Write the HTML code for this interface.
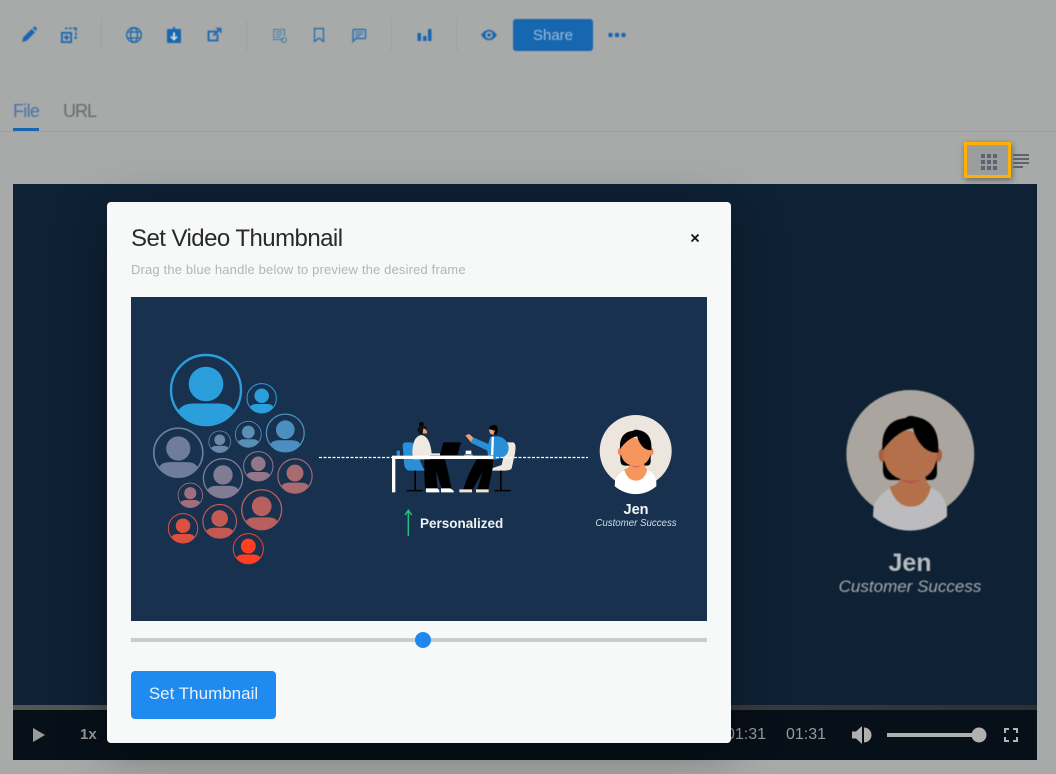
<!DOCTYPE html>
<html><head><meta charset="utf-8"><style>
html,body{margin:0;padding:0;width:1056px;height:774px;overflow:hidden;background:#a8aaa9;font-family:"Liberation Sans",sans-serif}
.a{position:absolute;white-space:nowrap}
svg{position:absolute;overflow:visible}
.b{filter:blur(.5px)}
.t{filter:blur(.3px)}
</style></head><body>
<div style="position:relative;width:1056px;height:774px;overflow:hidden">

<svg class="b" style="left:0;top:0" width="660" height="70" viewBox="0 0 660 70">
<g fill="#9d9f9e"><rect x="101" y="19" width="1" height="32"/><rect x="246" y="19" width="1" height="32"/><rect x="391" y="19" width="1" height="32"/><rect x="456" y="19" width="1" height="32"/></g>
<g fill="#1767b0">
<path d="M22,42L23.300,37.300L31.600,29L35,32.400L26.700,40.700ZM32.600,28L34,26.800Q34.800,26.200 35.600,27L36.600,28Q37.200,28.800 36.600,29.600L35.800,31.100Z"/>
<path d="M61,32H72V43H61ZM62.800,33.800V41.200H70.200V33.800ZM65.600,35H67.400V36.600H69V38.400H67.400V40H65.600V38.400H64V36.600H65.600Z"/>
<path d="M65,27.500h2.400v1.600H65ZM69,27.500h2.500v1.600H69ZM73,27.500h3.800v3.600h-1.600v-2H73ZM75.200,32.500h1.600v2.500h-1.600ZM75.200,36h1.600v2.800h-2.600v-1.500h1Z"/>
<rect x="167" y="29" width="14" height="14"/>
<rect x="173" y="27" width="2" height="5"/>
<path d="M417.500,33H421V41H417.500ZM423,36H426.500V41H423ZM428,29H431.500V41H428Z"/>
<path fill-rule="evenodd" d="M481,35Q484.500,29.700 489,29.700Q493.500,29.700 497,35Q493.500,40.300 489,40.300Q484.500,40.300 481,35ZM489,31.400A3.600,3.600 0 1 0 489,38.600A3.600,3.600 0 1 0 489,31.400Z"/>
<circle cx="489" cy="35" r="1.800"/>
<circle cx="610.500" cy="35" r="2.300"/><circle cx="617" cy="35" r="2.300"/><circle cx="623.500" cy="35" r="2.300"/>
</g>
<g fill="none" stroke="#1767b0">
<g stroke-width="1.300"><circle cx="134" cy="35" r="7.300"/><ellipse cx="134" cy="35" rx="3.400" ry="7.300"/><path d="M127.500,32H140.500M127.500,38H140.500"/></g>
<path d="M216,31.500H208.500V40.500H217.500V34" stroke-width="1.800"/>
<path d="M213.500,35.500L219.500,29.500" stroke-width="2"/><path d="M216,28.500H220.800V33" stroke-width="1.500"/>
<path d="M314.500,28.500H323.500V41.500L319,38L314.500,41.500Z" stroke-width="1.200"/>
<path d="M353,30.500Q353,29.500 354,29.500H364.500Q365.500,29.500 365.500,30.500V37.500Q365.500,38.500 364.500,38.500H356L353,41.500Z" stroke-width="1.500" stroke="#2a72b0"/>
<path d="M355.500,32H363M355.500,34.200H363M355.500,36.300H360" stroke-width="1.100" stroke="#2a72b0"/>
<g stroke="#3d79ad" stroke-width="1"><path d="M283.500,39.500H273.800V29.500H284.500V36"/><path d="M276,32H282M276,34.500H282M276,37H280"/><circle cx="284" cy="40" r="2.500"/></g>
</g>
<path d="M173,32.500H175V37.500L176.700,36L177.700,37L174,40.800L170.300,37L171.300,36L173,37.500Z" fill="#d5dbe0"/>
</svg>

<div class="a b" style="left:513px;top:19px;width:80px;height:32px;background:#1767b0;border-radius:3px;color:#9dbbd8;font-size:15px;line-height:33px;text-align:center">Share</div>
<div class="a b" style="left:13px;top:100px;font-size:18px;line-height:22px;color:#4b70a8;letter-spacing:-.7px">File</div>
<div class="a b" style="left:63px;top:100px;font-size:18px;line-height:22px;color:#666a6c;letter-spacing:-1px">URL</div>
<div class="a" style="left:0;top:131px;width:1056px;height:1px;background:#9ea09f"></div>
<div class="a" style="left:13px;top:128px;width:26px;height:3px;background:#1767b0"></div>

<div class="a" style="left:964px;top:142px;width:41px;height:30px;border:3px solid #ffb000;background:#9c9e9d;box-shadow:1px 2px 6px rgba(0,0,0,.4)"></div>
<svg style="left:0;top:0" width="1056" height="180" viewBox="0 0 1056 180"><g fill="#5b6470">
<rect x="981" y="154" width="4" height="4"/><rect x="987" y="154" width="4" height="4"/><rect x="993" y="154" width="4" height="4"/>
<rect x="981" y="160" width="4" height="4"/><rect x="987" y="160" width="4" height="4"/><rect x="993" y="160" width="4" height="4"/>
<rect x="981" y="166" width="4" height="4"/><rect x="987" y="166" width="4" height="4"/><rect x="993" y="166" width="4" height="4"/>
<rect x="1013" y="154" width="16" height="2"/><rect x="1013" y="158" width="16" height="2"/><rect x="1013" y="162" width="16" height="2"/><rect x="1013" y="166" width="10" height="2"/></g></svg>

<div class="a" style="left:13px;top:184px;width:1024px;height:521px;background:#0e2135"></div>
<div class="a" style="left:13px;top:705px;width:1024px;height:5px;background:linear-gradient(90deg,#565656,#2d2f33)"></div>
<div class="a" style="left:13px;top:710px;width:1024px;height:50px;background:#070f18"></div>

<svg style="left:0;top:0" width="0" height="0">
<defs>
<symbol id="jen" overflow="visible" viewBox="-192 -222 384 444" width="384" height="444" x="-192" y="-222">
<circle r="192" fill="var(--bg)"/>
<path d="M-82,-50V50Q-80,78 -58,78H60Q82,78 80,50V-50Z" fill="#000"/>
<ellipse cx="-84" cy="3" rx="11" ry="20" fill="var(--ear)"/><ellipse cx="84" cy="3" rx="11" ry="20" fill="var(--ear)"/>
<path d="M-112,188L-110,155Q-95,120 -60,103L-30,92H46L68,103Q100,118 110,160V188Q60,230 0,230Q-60,230 -112,188Z" fill="var(--shirt)"/>
<path d="M-62,98Q-34,92 -28,70H46Q50,90 62,98Q48,158 2,158Q-44,158 -62,98Z" fill="var(--skin)"/>
<ellipse cx="2" cy="70" rx="28" ry="18" fill="var(--neck)"/>
<path d="M-80,-20Q-80,-72 -30,-72Q30,-72 80,-20V10Q70,78 2,80Q-70,78 -80,10Z" fill="var(--skin)"/>
<path d="M-84,-20Q-86,-100 -14,-108Q-2,-118 14,-112Q84,-100 84,-20V-5Q60,-2 40,-20Q15,-45 8,-78Q-40,-70 -84,-10Z" fill="#000"/>
</symbol>
<symbol id="u" overflow="visible" viewBox="-36 -36 72 72" width="72" height="72" x="-36" y="-36">
<circle r="35" fill="none" stroke="currentColor" stroke-width="2.400"/>
<circle cy="-6" r="17.300" fill="currentColor"/>
<path d="M-27.500,20Q-23,13.500 -12,13.500H12Q23,13.500 27.500,20A33.500,33.500 0 0 1 -27.500,20Z" fill="currentColor"/>
</symbol>
</defs>
</svg>

<svg class="b" style="left:0;top:0;--bg:#aaa59e;--ear:#a85f45;--neck:#b5584f;--shirt:#bcbcbe;--skin:#b4704a" width="1056" height="700">
<use href="#jen" transform="translate(910.300,454) scale(.3333)"/>
</svg>
<div class="a b" style="left:810px;top:548px;width:200px;text-align:center;font-size:25px;font-weight:bold;line-height:30px;color:#b8bbbe">Jen</div>
<div class="a b" style="left:810px;top:577px;width:200px;text-align:center;font-size:17px;font-style:italic;line-height:20px;color:#a5abb2">Customer Success</div>

<svg style="left:0;top:0" width="1056" height="774" viewBox="0 0 1056 774">
<path d="M33,728L45,735L33,742Z" fill="#9a9a9a"/>
<path d="M852,731.500H856L862,726V744L856,738.500H852Z" fill="#b0b0b0"/>
<path d="M864,727.500A7.500,7.500 0 0 1 864,742.500Z" fill="#b0b0b0"/>
<rect x="887" y="733" width="92" height="4" fill="#b0b0b0"/><circle cx="979" cy="735" r="7.500" fill="#b0b0b0"/>
<path d="M1005,733V729H1009M1013,729H1017V733M1017,737V741H1013M1009,741H1005V737" fill="none" stroke="#b5b5b5" stroke-width="2"/>
</svg>
<div class="a" style="left:80px;top:725px;font-size:15px;font-weight:bold;line-height:20px;color:#9a9a9a">1x</div>
<div class="a" style="left:726px;top:725px;font-size:16px;line-height:20px;color:#9a9a9a">01:31</div>
<div class="a" style="left:786px;top:725px;font-size:16px;line-height:20px;color:#9a9a9a">01:31</div>

<div class="a" style="left:107px;top:202px;width:624px;height:541px;background:#f7f9f9;border-radius:4px;box-shadow:0 10px 50px rgba(0,0,0,.35)"></div>
<div class="a" style="left:131px;top:225px;font-size:24px;line-height:28px;color:#2a2a2a;letter-spacing:-.55px">Set Video Thumbnail</div>
<svg style="left:0;top:0" width="1056" height="300"><path d="M691.500,234.500L698.500,241.500M698.500,234.500L691.500,241.500" stroke="#111" stroke-width="1.800" fill="none"/></svg>
<div class="a" style="left:131px;top:262px;font-size:13px;line-height:16px;color:#b0b6bb;letter-spacing:.16px">Drag the blue handle below to preview the desired frame</div>

<div class="a" style="left:131px;top:297px;width:576px;height:324px;background:#17314f"></div>
<svg class="t" style="left:0;top:0;--bg:#ede6de;--ear:#ee8a5c;--neck:#e9695a;--shirt:#fff;--skin:#f6965f" width="1056" height="774" viewBox="0 0 1056 774">
<use href="#u" color="#2a9fdc" transform="translate(206,390)"/>
<use href="#u" color="#2a9fdc" transform="translate(261.700,398.300) scale(.42)"/>
<use href="#u" color="#4a8fc0" transform="translate(285.300,433) scale(.54)"/>
<use href="#u" color="#5a8fb5" transform="translate(248.300,434.300) scale(.37)"/>
<use href="#u" color="#6d88a8" transform="translate(219.700,441.700) scale(.31)"/>
<use href="#u" color="#6f7d9b" transform="translate(178.300,452.700) scale(.7)"/>
<use href="#u" color="#7f7c93" transform="translate(223,478.300) scale(.56)"/>
<use href="#u" color="#94768a" transform="translate(258.300,466.300) scale(.42)"/>
<use href="#u" color="#a96a70" transform="translate(295,476) scale(.49)"/>
<use href="#u" color="#a06f7d" transform="translate(190.300,495.300) scale(.35)"/>
<use href="#u" color="#b7605d" transform="translate(261.700,509.700) scale(.57)"/>
<use href="#u" color="#c35a52" transform="translate(219.700,521.300) scale(.48)"/>
<use href="#u" color="#dd5040" transform="translate(183,528.300) scale(.42)"/>
<use href="#u" color="#ff3f22" transform="translate(248.300,548.700) scale(.43)"/>
<use href="#jen" transform="translate(635.700,451) scale(.1875)"/>
<g transform="translate(380,400) scale(.3333)">
<path d="M68,135Q68,127 80,127H97L130,205H145Q145,212 135,212H90Q75,212 72,190Z" fill="#2a8fd6"/>
<rect x="103" y="212" width="5" height="58" fill="#000"/><rect x="80" y="270" width="48" height="4" fill="#000"/>
<rect x="50" y="152" width="10" height="15" fill="#2a8fd6"/>
<path d="M380,127H400Q410,130 405,160L395,205Q390,212 370,212H325L335,205L365,195Z" fill="#eee8df"/>
<rect x="360" y="212" width="5" height="58" fill="#000"/><rect x="343" y="270" width="49" height="4" fill="#000"/>
<circle cx="124" cy="73" r="7" fill="#000"/><circle cx="127" cy="90" r="14" fill="#111"/><path d="M130,85Q143,88 141,100L128,101Z" fill="#f0a070"/>
<path d="M97,160Q97,108 125,105Q150,110 155,160H180V166H150V178H100Z" fill="#efe9e1"/>
<path d="M133,178H195Q205,220 215,265H185L168,212L172,265H135Q132,220 133,178Z" fill="#000"/>
<path d="M138,265H172Q180,270 178,277H138ZM183,265H210Q222,270 222,277H183Z" fill="#fff"/>
<path d="M190,127H243L232,165H180Z" fill="#000"/>
<path d="M257,152H274V162H257ZM253,164H278V166H253Z" fill="#fff"/>
<path d="M326,88Q330,74 345,75Q355,78 353,92L350,103H338L332,92Z" fill="#000"/><path d="M326,88Q338,88 340,92L345,92L340,105L330,100Z" fill="#f0a070"/>
<path d="M256,106L268,102L282,115L272,126Z" fill="#f0a070"/>
<path d="M330,112Q370,100 385,135Q392,170 350,178H325L322,152L272,128L280,112L325,132Z" fill="#2a8fd6"/>
<path d="M335,110H342L340,165H333Z" fill="#fff"/>
<path d="M340,178H290Q262,225 250,268H278L308,215L292,268H325L338,205Z" fill="#000"/>
<path d="M238,268H276V277H238ZM288,268H326V277H288Z" fill="#efe3d4"/>
<rect x="36" y="167" width="304" height="10" fill="#fff"/><rect x="36" y="177" width="10" height="100" fill="#fff"/>
<path d="M85,408V335M75,345L85,331L95,345" fill="none" stroke="#22c07a" stroke-width="4.500"/>
</g>
<path d="M319,457.500H392M496,457.500H588" stroke="#fff" stroke-width="1.200" stroke-dasharray="3 1.500" fill="none"/>
</svg>
<div class="a t" style="left:420px;top:515px;font-size:13.500px;font-weight:bold;line-height:17px;color:#f0f3f5">Personalized</div>
<div class="a t" style="left:596px;top:502px;width:80px;text-align:center;font-size:14.500px;font-weight:bold;line-height:17px;color:#f5f7f8">Jen</div>
<div class="a t" style="left:586px;top:518px;width:100px;text-align:center;font-size:9.700px;font-style:italic;line-height:12px;color:#d5dce3">Customer Success</div>

<div class="a" style="left:131px;top:638px;width:576px;height:4px;background:#cccccc"></div>
<div class="a" style="left:415px;top:632px;width:16px;height:16px;border-radius:50%;background:#1f87ee"></div>
<div class="a" style="left:131px;top:671px;width:145px;height:48px;background:#1f8af0;border-radius:4px;color:#e8f1fc;font-size:17px;line-height:45px;text-align:center">Set Thumbnail</div>
</div>
</body></html>
